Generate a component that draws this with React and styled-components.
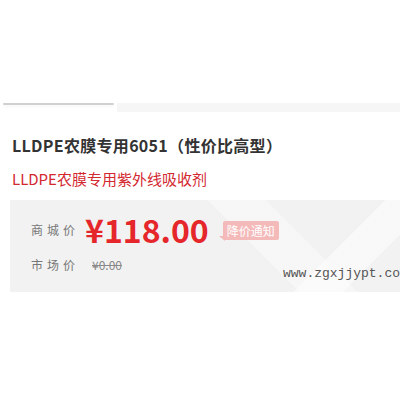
import React from "react";
import styled, { createGlobalStyle } from "styled-components";

const Global = createGlobalStyle`
  html, body { margin: 0; padding: 0; background: #fff; }
  body { font-family: "Microsoft YaHei", "Noto Sans CJK SC", "Noto Sans", sans-serif; overflow: hidden; }
`;

const Page = styled.div`
  width: 400px;
  height: 400px;
  position: relative;
  overflow: hidden;
  padding-top: 103px;
  box-sizing: border-box;
`;

const TopStrip = styled.div`
  display: flex;
  align-items: flex-start;
  height: 10px;
  padding-left: 3px;
`;

const TabLine = styled.div`
  width: 111px;
  height: 2px;
  background: #d0d0d0;
  border-radius: 1px;
  box-shadow: 0 2px 3px rgba(0, 0, 0, 0.04);
`;

const TabRest = styled.div`
  flex: 1;
  height: 9px;
  margin-left: 3px;
  background: #f6f6f6;
`;

const Title = styled.h1`
  margin: 20px 0 0 12px;
  font-size: 16px;
  line-height: 24px;
  font-weight: bold;
  color: #333;
  white-space: nowrap;
  letter-spacing: 0.3px;
`;

const Subtitle = styled.p`
  margin: 11px 0 0 12px;
  font-size: 15px;
  line-height: 22px;
  color: #d3282f;
  white-space: nowrap;
`;

const PriceBox = styled.div`
  margin: 10px 0 0 10px;
  height: 92px;
  box-sizing: border-box;
  padding: 11px 0 0 21px;
  background:
    linear-gradient(135deg, transparent 78%, rgba(255,255,255,0.5) 78%, rgba(255,255,255,0.5) 88%, transparent 88%),
    linear-gradient(45deg, transparent 60%, rgba(255,255,255,0.35) 60%, rgba(255,255,255,0.35) 72%, transparent 72%),
    #f2f2f2;
  display: flex;
  flex-direction: column;
  gap: 2px;
`;

const Row = styled.div`
  display: flex;
  align-items: center;
  height: ${(p) => p.$h}px;
`;

const Label = styled.span`
  width: 56px;
  font-size: 12px;
  letter-spacing: 4px;
  color: #777;
  white-space: nowrap;
`;

const Price = styled.span`
  font-size: 32px;
  font-weight: bold;
  color: #e5262b;
  line-height: 36px;
  margin-left: -2px;
`;

const Badge = styled.span`
  position: relative;
  margin-left: 14px;
  margin-top: 3px;
  background: #f4baba;
  color: #fff;
  font-size: 12px;
  line-height: 19px;
  padding: 0 4px;
  border-radius: 2px;
  &::after {
    content: "";
    position: absolute;
    left: -4px;
    bottom: -1px;
    border-style: solid;
    border-width: 0 6px 5px 0;
    border-color: transparent #f4baba transparent transparent;
  }
`;

const OldPrice = styled.span`
  font-size: 12px;
  color: #888;
  text-decoration: line-through;
  margin-left: 5px;
`;

const Watermark = styled.div`
  position: absolute;
  left: 283px;
  top: 266px;
  font-family: "Liberation Mono", "DejaVu Sans Mono", monospace;
  font-size: 13px;
  color: #555;
  white-space: nowrap;
`;

export default function App() {
  return (
    <Page>
      <Global />
      <TopStrip>
        <TabLine />
        <TabRest />
      </TopStrip>
      <Title>LLDPE农膜专用6051（性价比高型）</Title>
      <Subtitle>LLDPE农膜专用紫外线吸收剂</Subtitle>
      <PriceBox>
        <Row $h={36}>
          <Label>商城价</Label>
          <Price>¥118.00</Price>
          <Badge>降价通知</Badge>
        </Row>
        <Row $h={30}>
          <Label>市场价</Label>
          <OldPrice>¥0.00</OldPrice>
        </Row>
      </PriceBox>
      <Watermark>www.zgxjjypt.com</Watermark>
    </Page>
  );
}
